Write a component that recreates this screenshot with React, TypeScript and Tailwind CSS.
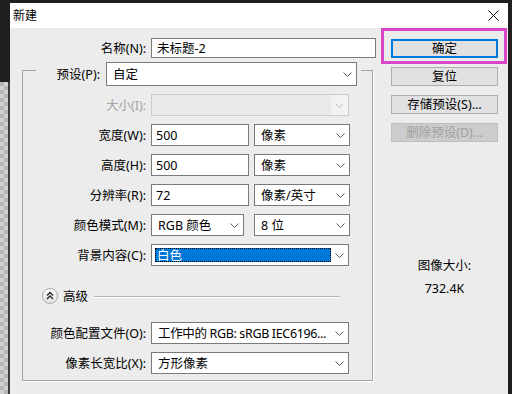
import * as React from "react";

function Chevron({ color = "#5a5a5a" }: { color?: string }) {
  return (
    <svg width="9" height="5" viewBox="0 0 9 5" fill="none">
      <polyline points="0.5,0.5 4.5,4.5 8.5,0.5" stroke={color} strokeWidth="1" />
    </svg>
  );
}

function Field({ value, width }: { value: string; width: string }) {
  return (
    <div
      className={
        "h-[22px] flex items-center border border-[#7a7a7a] bg-white pl-[4px] whitespace-nowrap overflow-hidden " +
        width
      }
    >
      {value}
    </div>
  );
}

function Select({
  value,
  width,
  height = "h-[22px]",
  disabled = false,
  selected = false,
  tight = false,
}: {
  value: string;
  width: string;
  height?: string;
  disabled?: boolean;
  selected?: boolean;
  tight?: boolean;
}) {
  if (disabled) {
    return (
      <div className={"flex border border-[#cccccc] bg-[#e9e9e9] " + width + " " + height}>
        <div className="flex-1" />
        <div className="w-[17px] flex items-center justify-center bg-[#f2f2f2]">
          <Chevron color="#bdbdbd" />
        </div>
      </div>
    );
  }
  return (
    <div className={"flex border border-[#7a7a7a] bg-white " + width + " " + height}>
      {selected ? (
        <div className="flex-1 my-[3px] ml-[3px] flex items-center bg-[#0078d7] border border-dotted border-black text-white pl-[1px]">
          {value}
        </div>
      ) : (
        <div
          className={
            "flex-1 flex items-center pl-[6px] whitespace-nowrap overflow-hidden " +
            (tight ? "tracking-[-0.35px]" : "")
          }
        >
          {value}
        </div>
      )}
      <div className="w-[17px] shrink-0 flex items-center justify-center">
        <Chevron />
      </div>
    </div>
  );
}

function Row({
  label,
  disabled = false,
  children,
}: {
  label: string;
  disabled?: boolean;
  children: React.ReactNode;
}) {
  return (
    <div className="h-[22px] flex items-center">
      <div
        className={
          "w-[124px] pr-[1px] text-right whitespace-nowrap " + (disabled ? "text-[#a3a3a3]" : "text-black")
        }
      >
        {label}
      </div>
      <div className="ml-[4px] flex gap-[5px]">{children}</div>
    </div>
  );
}

function Button({
  children,
  primary = false,
  disabled = false,
}: {
  children: React.ReactNode;
  primary?: boolean;
  disabled?: boolean;
}) {
  return (
    <div
      className={
        "h-[19px] w-[107px] flex items-center justify-center " +
        (primary
          ? "border-2 border-[#0078d7] bg-[#e1e1e1]"
          : disabled
          ? "border border-[#bfbfbf] bg-[#cccccc] text-[#a0a0a0]"
          : "border border-[#adadad] bg-[#e1e1e1]")
      }
    >
      {children}
    </div>
  );
}

export default function App() {
  return (
    <div className="w-[512px] h-[394px] bg-[#1f1f1f] flex overflow-hidden text-[12.5px] leading-[17px] text-black font-['Noto_Sans','Noto_Sans_CJK_SC',sans-serif]">
      {/* canvas behind the dialog */}
      <div className="w-[10px] flex flex-col">
        <div className="h-[82px]" />
        <div className="flex-1 flex">
          <div className="w-[8px] bg-[image:repeating-conic-gradient(#d2d2d2_0%_25%,#b6b6b6_0%_50%)] bg-[length:8px_8px]" />
          <div className="w-[2px] bg-[#3c3c3c]" />
        </div>
      </div>

      <div className="mt-[3px] w-[498px] flex flex-col bg-[#ececec]">
        {/* title bar */}
        <div className="h-[25px] bg-white flex items-center justify-between pl-[3px] pr-[9px]">
          <span className="text-[12px]">新建</span>
          <svg width="11" height="11" viewBox="0 0 11 11">
            <path d="M0.5 0.5 L10.5 10.5 M10.5 0.5 L0.5 10.5" stroke="#111" strokeWidth="1" />
          </svg>
        </div>

        <div className="flex">
          {/* form column */}
          <div className="w-[366px] flex flex-col">
            <div className="mt-[10px] h-[20px] flex items-center">
              <div className="w-[137px] text-right pr-[1px]">名称(N):</div>
              <div className="ml-[4px] h-[20px] w-[225px] flex items-center border border-[#7a7a7a] bg-white pl-[5px]">
                未标题-2
              </div>
            </div>

            <div className="mt-[12px] ml-[12px] w-[351px] border border-[#a3a3a3] shadow-[1px_1px_0_#ffffff] flex flex-col pb-[6px]">
              <div className="-mt-[9px] ml-[13px] w-[325px] h-[24px] flex items-center bg-[#ececec]">
                <div className="w-[65px] text-right pr-[1px]">预设(P):</div>
                <div className="ml-[5px]">
                  <Select value="自定" width="w-[251px]" height="h-[24px]" />
                </div>
              </div>

              <div className="mt-[8px] flex flex-col gap-[8px]">
                <Row label="大小(I):" disabled>
                  <Select value="" width="w-[198px]" disabled />
                </Row>
                <Row label="宽度(W):">
                  <Field value="500" width="w-[98px]" />
                  <Select value="像素" width="w-[96px]" />
                </Row>
                <Row label="高度(H):">
                  <Field value="500" width="w-[98px]" />
                  <Select value="像素" width="w-[96px]" />
                </Row>
                <Row label="分辨率(R):">
                  <Field value="72" width="w-[98px]" />
                  <Select value="像素/英寸" width="w-[96px]" />
                </Row>
                <Row label="颜色模式(M):">
                  <Select value="RGB 颜色" width="w-[93px]" />
                  <div className="w-[96px] ml-[5px]">
                    <Select value="8 位" width="w-[96px]" />
                  </div>
                </Row>
                <Row label="背景内容(C):">
                  <Select value="白色" width="w-[198px]" selected />
                </Row>
              </div>

              <div className="mt-[22px] h-[16px] flex items-center">
                <svg className="ml-[19px]" width="16" height="16" viewBox="0 0 16 16">
                  <defs>
                    <linearGradient id="adv" x1="0" y1="0" x2="0" y2="1">
                      <stop offset="0" stopColor="#ffffff" />
                      <stop offset="1" stopColor="#e2e2e2" />
                    </linearGradient>
                  </defs>
                  <circle cx="8" cy="8" r="7.5" fill="url(#adv)" stroke="#a8a8a8" />
                  <path d="M5 7.5 L8 4.5 L11 7.5 M5 11 L8 8 L11 11" stroke="#222" strokeWidth="1.3" fill="none" />
                </svg>
                <span className="ml-[5px]">高级</span>
                <div className="ml-[6px] w-[246px] h-[1px] bg-[#b4b4b4] shadow-[0_1px_0_#ffffff]" />
              </div>

              <div className="mt-[18px] flex flex-col gap-[8px]">
                <Row label="颜色配置文件(O):">
                  <Select value="工作中的 RGB: sRGB IEC6196..." width="w-[198px]" tight />
                </Row>
                <Row label="像素长宽比(X):">
                  <Select value="方形像素" width="w-[198px]" />
                </Row>
              </div>
            </div>
          </div>

          {/* buttons column */}
          <div className="relative ml-[15px] pt-[11px] w-[107px] flex flex-col items-center">
            <div className="flex flex-col gap-[9px]">
              <Button primary>确定</Button>
              <Button>复位</Button>
              <Button>存储预设(S)...</Button>
              <Button disabled>删除预设(D)...</Button>
            </div>
            <div className="mt-[115px] text-center">图像大小:</div>
            <div className="mt-[6px] text-center">732.4K</div>
            <div className="absolute -left-[10px] top-0 w-[126px] h-[36px] border-[3px] border-[#d846c9]" />
          </div>
        </div>
      </div>
    </div>
  );
}
